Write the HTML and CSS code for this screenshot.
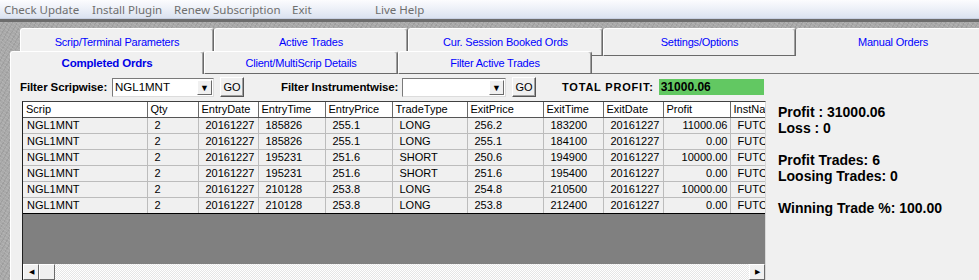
FILE: index.html
```html
<!doctype html>
<html lang="en">

<head>
  <meta charset="utf-8">
  <title>Completed Orders</title>
  <link rel="stylesheet" href="styles.css">
</head>

<body>
  <div class="menubar">
    <span class="menu-item w88">Check Update</span>
    <span class="menu-item w82">Install Plugin</span>
    <span class="menu-item w118">Renew Subscription</span>
    <span class="menu-item w83">Exit</span>
    <span class="menu-item">Live Help</span>
  </div>

  <div class="window">
    <div class="tabrow tabrow-top">
      <div class="tab w194">Scrip/Terminal Parameters</div>
      <div class="tab w194">Active Trades</div>
      <div class="tab w195">Cur. Session Booked Ords</div>
      <div class="tab w193">Settings/Options</div>
      <div class="tab tab-last w194">Manual Orders</div>
    </div>
    <div class="tabrow tabrow-bottom">
      <div class="tab tab-low tab-selected w194">Completed Ordrs</div>
      <div class="tab tab-low w194">Client/MultiScrip Details</div>
      <div class="tab tab-low w194">Filter Active Trades</div>
      <div class="tab-filler"></div>
    </div>

    <div class="panel">
      <div class="filters">
        <span class="filter-label lbl-scrip">Filter Scripwise:</span>
        <div class="combo combo-scrip">
          <span class="combo-text">NGL1MNT</span>
          <span class="combo-btn">&#9660;</span>
        </div>
        <button class="go-btn">GO</button>
        <span class="filter-label lbl-inst">Filter Instrumentwise:</span>
        <div class="combo combo-inst">
          <span class="combo-text"></span>
          <span class="combo-btn">&#9660;</span>
        </div>
        <button class="go-btn">GO</button>
        <span class="total-label">TOTAL PROFIT:</span>
        <span class="total-value">31000.06</span>
      </div>

      <div class="content">
        <div class="grid">
          <table class="trades">
            <colgroup>
              <col style="width:124px"><col style="width:51px"><col style="width:60px">
              <col style="width:67px"><col style="width:67px"><col style="width:75px">
              <col style="width:76px"><col style="width:60px"><col style="width:60px">
              <col style="width:67px"><col style="width:70px">
            </colgroup>
            <thead>
              <tr>
                <th>Scrip</th><th>Qty</th><th>EntryDate</th><th>EntryTime</th><th>EntryPrice</th>
                <th>TradeType</th><th>ExitPrice</th><th>ExitTime</th><th>ExitDate</th><th>Profit</th><th>InstName</th>
              </tr>
            </thead>
            <tbody>
              <tr>
                <td class="scrip">NGL1MNT</td><td>2</td><td>20161227</td><td>185826</td><td>255.1</td>
                <td>LONG</td><td>256.2</td><td>183200</td><td>20161227</td><td class="num">11000.06</td><td>FUTCOM</td>
              </tr>
              <tr>
                <td class="scrip">NGL1MNT</td><td>2</td><td>20161227</td><td>185826</td><td>255.1</td>
                <td>LONG</td><td>255.1</td><td>184100</td><td>20161227</td><td class="num">0.00</td><td>FUTCOM</td>
              </tr>
              <tr>
                <td class="scrip">NGL1MNT</td><td>2</td><td>20161227</td><td>195231</td><td>251.6</td>
                <td>SHORT</td><td>250.6</td><td>194900</td><td>20161227</td><td class="num">10000.00</td><td>FUTCOM</td>
              </tr>
              <tr>
                <td class="scrip">NGL1MNT</td><td>2</td><td>20161227</td><td>195231</td><td>251.6</td>
                <td>SHORT</td><td>251.6</td><td>195400</td><td>20161227</td><td class="num">0.00</td><td>FUTCOM</td>
              </tr>
              <tr>
                <td class="scrip">NGL1MNT</td><td>2</td><td>20161227</td><td>210128</td><td>253.8</td>
                <td>LONG</td><td>254.8</td><td>210500</td><td>20161227</td><td class="num">10000.00</td><td>FUTCOM</td>
              </tr>
              <tr class="last">
                <td class="scrip">NGL1MNT</td><td>2</td><td>20161227</td><td>210128</td><td>253.8</td>
                <td>LONG</td><td>253.8</td><td>212400</td><td>20161227</td><td class="num">0.00</td><td>FUTCOM</td>
              </tr>
            </tbody>
          </table>
          <div class="grid-empty"></div>
          <div class="hscroll">
            <span class="sb-btn">&#9664;</span>
            <span class="sb-thumb"></span>
            <span class="sb-track"></span>
            <span class="sb-btn">&#9654;</span>
          </div>
        </div>

        <div class="stats">
          <p>Profit : 31000.06</p>
          <p>Loss : 0</p>
          <p class="gap">Profit Trades: 6</p>
          <p>Loosing Trades: 0</p>
          <p class="gap">Winning Trade %: 100.00</p>
        </div>
      </div>
    </div>
  </div>
</body>
</html>
```

FILE: styles.css
```css
body {
  margin: 0;
  width: 979px;
  height: 280px;
  overflow: hidden;
  font-family: "Liberation Sans", Arial, sans-serif;
  background: #f0f0f0;
}

/* menu */
.menubar {
  display: flex;
  height: 18px;
  padding-left: 4px;
  border-bottom: 1px solid #c8d0e2;
  background: linear-gradient(#fcfcfe, #eef1f8 45%, #dbe2f0);
  font-family: "Noto Sans", sans-serif;
  font-size: 11.5px;
  line-height: 19px;
  color: #6e6e6e;
}
.menu-item { flex: none; }
.w88 { width: 88px; }
.w82 { width: 82px; }
.w118 { width: 118px; }
.w83 { width: 83px; }

/* textured window */
.window {
  height: 258px;
  overflow: hidden;
  padding: 6px 0 0 10px;
  border-top: 3px solid #6c6c6c;
  background:
    repeating-linear-gradient(35deg, rgba(255,255,255,.10) 0 1px, transparent 1px 3px),
    repeating-linear-gradient(-60deg, rgba(0,0,0,.07) 0 1px, transparent 1px 4px),
    #a9a9a9;
}

/* tabs */
.tabrow {
  display: flex;
  width: 1000px;
}
.tabrow-top {
  margin-left: 10px;
  height: 28px;
}
.tabrow-bottom {
  margin-top: -5px;
  height: 23px;
}
.tab {
  flex: none;
  box-sizing: border-box;
  height: 28px;
  background: #f0f0f0;
  border-top: 1px solid #ffffff;
  border-left: 1px solid #ffffff;
  border-right: 1px solid #6a6a6a;
  border-bottom: 1px solid #6a6a6a;
  border-radius: 3px 3px 0 0;
  box-shadow: inset -1px 0 #a0a0a0;
  color: #0000ff;
  font-size: 11px;
  letter-spacing: -0.2px;
  text-align: center;
  line-height: 26px;
}
.tab-last {
  border: none;
  box-shadow: none;
  border-top: 1px solid #ffffff;
}
.tab-low {
  height: 23px;
  line-height: 22px;
}
.tab-selected {
  border-bottom: none;
  font-weight: bold;
  font-size: 11.5px;
  color: #0000e6;
}
.tab-filler {
  flex: 1;
  margin-top: 5px;
  background: #f0f0f0;
  border-bottom: 1px solid #7a7a7a;
}
.w194 { width: 194px; }
.w195 { width: 195px; }
.w193 { width: 193px; }

/* panel */
.panel {
  height: 220px;
  background: #f0f0f0;
  border-left: 1px solid #ffffff;
}
.filters {
  display: flex;
  align-items: center;
  height: 20px;
  padding: 3px 0 0 9px;
}
.filter-label {
  font-size: 11.5px;
  font-weight: bold;
  color: #000;
  letter-spacing: -0.1px;
}
.lbl-scrip { width: 92px; }
.lbl-inst { width: 121px; margin-left: 37px; }

.combo {
  display: flex;
  box-sizing: border-box;
  height: 19px;
  background: #fff;
  border: 1px solid #7a7a7a;
  border-right-color: #dcdcdc;
  border-bottom-color: #dcdcdc;
}
.combo-scrip { width: 102px; }
.combo-inst { width: 104px; }
.combo-text {
  flex: 1;
  font-size: 11.5px;
  line-height: 16px;
  padding-left: 2px;
}
.combo-btn {
  width: 15px;
  margin: 1px;
  box-sizing: border-box;
  background: #f0f0f0;
  border: 1px solid #fff;
  border-right-color: #6a6a6a;
  border-bottom-color: #6a6a6a;
  font-size: 9px;
  line-height: 14px;
  text-align: center;
}
.go-btn {
  width: 24px;
  height: 20px;
  margin-left: 6px;
  padding: 0;
  background: #f0f0f0;
  border: 1px solid #fff;
  border-right-color: #555;
  border-bottom-color: #555;
  box-shadow: inset -1px -1px #a0a0a0;
  font-family: "Liberation Sans", Arial, sans-serif;
  font-size: 11px;
  color: #000;
}
.total-label {
  margin-left: 26px;
  font-size: 11px;
  font-weight: bold;
  letter-spacing: 0.8px;
}
.total-value {
  width: 103px;
  height: 16px;
  margin-left: 5px;
  padding-left: 2px;
  background: #62c862;
  font-size: 12px;
  font-weight: bold;
  line-height: 16px;
}

/* grid */
.content {
  display: flex;
  margin-top: 4px;
}
.grid {
  flex: none;
  width: 742px;
  margin-left: 11px;
  overflow: hidden;
  border-top: 1px solid #404040;
  border-left: 1px solid #202020;
  border-right: 1px solid #d8d8d8;
}
.trades {
  table-layout: fixed;
  width: 767px;
  border-collapse: collapse;
  font-size: 11px;
}
.trades th,
.trades td {
  height: 15px;
  padding: 0 0 0 7px;
  white-space: nowrap;
  overflow: hidden;
  text-align: left;
  line-height: 15px;
  border-right: 1px solid #bcbcbc;
  border-bottom: 1px solid #bcbcbc;
  color: #000;
}
.trades th {
  padding-left: 3px;
  font-weight: normal;
  background: #fff;
  border-right-color: #6a6a6a;
  border-bottom-color: #555;
}
.trades td.scrip { padding-left: 4px; }
.trades td.num {
  text-align: right;
  padding: 0 2px 0 0;
}
.trades tr.last td { border-bottom-color: #000; }

.grid-empty {
  height: 50px;
  background: #808080;
}
.hscroll {
  display: flex;
  height: 16px;
  background: repeating-conic-gradient(#ffffff 0 25%, #e6e6e6 0 50%) 0 0 / 2px 2px;
}
.sb-btn,
.sb-thumb {
  box-sizing: border-box;
  width: 16px;
  height: 16px;
  background: #f0f0f0;
  border: 1px solid #fff;
  border-right-color: #6a6a6a;
  border-bottom-color: #6a6a6a;
  font-size: 7px;
  line-height: 14px;
  text-align: center;
}
.sb-track { flex: 1; }

/* summary */
.stats {
  margin-left: 12px;
  padding-top: 3px;
  font-size: 14px;
  font-weight: bold;
  line-height: 16px;
}
.stats p { margin: 0; }
.stats p.gap { margin-top: 16px; }
```
